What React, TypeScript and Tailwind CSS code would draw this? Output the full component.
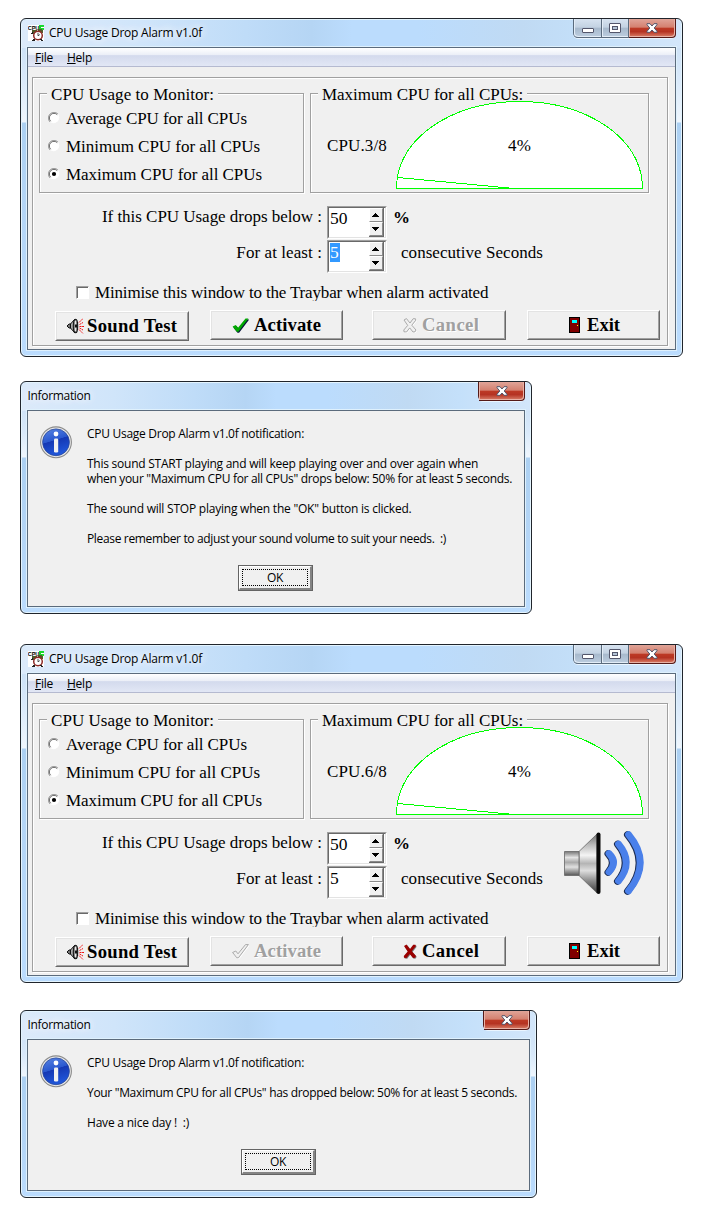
import type { ReactNode } from "react";

const SERIF = "font-['Liberation_Serif','Times_New_Roman',serif] text-[17px] leading-[20px] whitespace-pre";
const UI = "font-['Open_Sans','Noto_Sans',sans-serif] text-[12px] leading-[15px] whitespace-pre";
const ETCHED = "border border-[#a0a0a0] shadow-[1px_1px_0_#fff,inset_1px_1px_0_#fff]";

function AppIcon() {
  return (
    <svg width="16" height="16" viewBox="0 0 16 16" shapeRendering="crispEdges">
      <rect width="16" height="16" fill="#fff" />
      <path d="M11 0h5v2h-3v1h3v2h-5z" fill="#16d92b" />
      <text x="-.3" y="4.500" fontFamily="Liberation Sans" fontWeight="bold" fontSize="5.500" fill="#000">CPU</text>
      <path d="M4 5h5v2H7l-1 2H4zM10 4h4l1 2v2h-2l-2-2h-1z" fill="#4e5a28" />
      <g shapeRendering="auto">
        <circle cx="10" cy="10.500" r="4.300" fill="#fff" stroke="#8e2a26" strokeWidth="1.500" />
        <path d="M10 7.800v3l1.800-1.200" fill="none" stroke="#222" strokeWidth=".8" />
      </g>
      <path d="M5 14h2v2H4zM12 14h2l1 2h-2zM4 7h1v2H3z" fill="#222" />
    </svg>
  );
}

function CloseGlyph() {
  return (
    <svg width="12" height="10" viewBox="0 0 12 10">
      <path d="M1 .7h3L6 3 8 .7h3v1L8.200 5 11 8.300v1H8L6 7 4 9.300H1v-1L3.800 5 1 1.700z" fill="#fff" stroke="#53566b" strokeWidth="1" strokeLinejoin="round" />
    </svg>
  );
}

function CloseButton({ width }: { width: string }) {
  return (
    <div className={"flex h-[19px] items-center justify-center rounded-br-[4px] border-r border-b border-[#551a18] bg-[linear-gradient(180deg,#e0a498_0%,#d4806f_46%,#bd3a25_50%,#b53322_70%,#d9806a_100%)] shadow-[inset_-1px_-1px_0_#e9b2a6,inset_1px_0_0_#e9b2a6] " + width}>
      <CloseGlyph />
    </div>
  );
}

function CaptionButtons() {
  const btn = "flex h-[19px] items-center justify-center border-b border-r border-[#5a6b7d] bg-[linear-gradient(180deg,#d7e3f0_0%,#c3d2e2_46%,#a7b9cc_50%,#bccddf_100%)] shadow-[inset_1px_-1px_0_#e3edf7]";
  return (
    <div className="ml-auto flex rounded-b-[5px] border-l border-[#5a6b7d] shadow-[0_1px_0_#eaf5ff]">
      <div className={btn + " w-[28px] rounded-bl-[4px]"}>
        <svg width="12" height="6" viewBox="0 0 12 6" className="mt-[4px]">
          <rect x=".5" y="1.500" width="11" height="4" rx=".5" fill="#fff" stroke="#53566b" />
        </svg>
      </div>
      <div className={btn + " w-[27px]"}>
        <svg width="12" height="10" viewBox="0 0 12 10">
          <rect x=".5" y=".5" width="11" height="9" rx=".5" fill="#fff" stroke="#53566b" />
          <rect x="3.500" y="3.500" width="5" height="3" fill="#b4c4d6" stroke="#53566b" />
        </svg>
      </div>
      <CloseButton width="w-[47px]" />
    </div>
  );
}

const SIDE: Record<string, string> = {
  tall: "bg-[linear-gradient(180deg,#c3dbf3_0px,#d9e9fa_60px,#eff6fd_103px,#acd0f2_104px,#b4d5f6_180px,#bbdcfe_100%)]",
  mid: "bg-[linear-gradient(180deg,#c3dbf3_0px,#d9e9fa_50px,#eff6fd_75px,#acd0f2_76px,#b4d5f6_150px,#bbdcfe_100%)]",
  low: "bg-[linear-gradient(180deg,#c3dbf3_0px,#d9e9fa_45px,#eff6fd_65px,#acd0f2_66px,#b4d5f6_130px,#bbdcfe_100%)]",
};

function Frame({ size, side, title, titleClass, icon, dialog, children }: {
  size: string; side: string; title: string; titleClass: string; icon?: boolean; dialog?: boolean; children: ReactNode;
}) {
  return (
    <div className={"flex flex-col rounded-[6px] border border-[#20252c] shadow-[inset_0_0_0_1px_#e4f4fe] " + size + " " + SIDE[side]}>
      <div className="mx-px mt-px -mb-px flex h-[28px] items-start rounded-t-[4px] bg-[linear-gradient(90deg,#dceafa_0%,#d0e5fa_18%,#bfdcf8_34%,#b5d5f4_44%,#bbdcfd_50%,#bbdcfd_60%,#c0daf3_76%,#c4e0fa_86%,#d3e6fa_100%)] px-[5px]">
        <div className="-mt-px flex pt-[6px]">
          {icon && <div className="mr-[5px] ml-px"><AppIcon /></div>}
          <span className={UI + " text-black [text-shadow:0_0_8px_#fff,0_0_8px_#fff] " + titleClass}>{title}</span>
        </div>
        <div className="-mt-px ml-auto flex">
          {dialog ? <div className="rounded-b-[5px] border-l border-[#551a18] shadow-[0_1px_0_#eaf5ff]"><CloseButton width="w-[46px]" /></div> : <CaptionButtons />}
        </div>
      </div>
      <div className="mx-[6px] mb-[6px] flex flex-1 flex-col border border-[#5b6b7c] bg-[#f0f0f0] shadow-[0_0_0_1px_#dff1fd]">{children}</div>
    </div>
  );
}

function Radio({ on }: { on?: boolean }) {
  return (
    <svg width="12" height="12" viewBox="0 0 12 12">
      <circle cx="6" cy="6" r="5" fill="#fff" />
      <path d="M2 10A5.500 5.500 0 0 1 10 2" fill="none" stroke="#a0a0a0" />
      <path d="M2.700 9.300A4.500 4.500 0 0 1 9.300 2.700" fill="none" stroke="#696969" />
      <path d="M2.300 9.900A5.500 5.500 0 0 0 9.900 2.300" fill="none" stroke="#fff" />
      {on && <circle cx="6" cy="6" r="2.100" fill="#000" />}
    </svg>
  );
}

function Gauge({ value }: { value: string }) {
  return (
    <div className="relative h-[90px] w-[248px]">
      <svg width="248" height="90" viewBox="0 0 248 90" shapeRendering="crispEdges">
        <path d="M.5 88.500V85C3 35 60 1.500 123.500 1.500S244 35 246.500 85V88.500Z" fill="#fff" stroke="#00ff00" />
        <path d="M2 77.500L118 88.500" stroke="#00ff00" />
      </svg>
      <span className={"absolute top-[36px] left-[112px] tracking-[0.3px] text-black " + SERIF}>{value}</span>
    </div>
  );
}

function Spin() {
  const b = "flex w-[14px] items-center justify-center border-t border-l border-r border-b border-t-white border-l-white border-r-[#8a8a8a] border-b-[#8a8a8a] bg-[#f0f0f0]";
  return (
    <div className="mr-px ml-auto flex h-[29px] flex-col border-r border-b border-[#696969]">
      <div className={b + " h-[14px]"}><svg width="8" height="4" shapeRendering="crispEdges"><path d="M3 0h1v1h1v1h1v1h1v1H0V3h1V2h1V1h1z" /></svg></div>
      <div className={b + " h-[14px]"}><svg width="8" height="4" shapeRendering="crispEdges"><path d="M0 0h7v1H6v1H5v1H4v1H3V3H2V2H1V1H0z" /></svg></div>
    </div>
  );
}

function NumberBox({ value, selected }: { value: string; selected?: boolean }) {
  return (
    <div className="ml-[5px] flex h-[33px] w-[60px] border-t border-r border-b border-l border-t-[#a0a0a0] border-r-white border-b-white border-l-[#a0a0a0]">
      <div className="flex flex-1 items-start border-t border-r border-b border-l border-t-[#696969] border-r-[#e3e3e3] border-b-[#e3e3e3] border-l-[#696969] bg-white pl-px">
        <span className={"mt-px font-['Liberation_Serif','Times_New_Roman',serif] text-[17.5px] leading-[19px] " + (selected ? "bg-[#3399ff] pr-px text-white" : "text-black")}>{value}</span>
        <Spin />
      </div>
    </div>
  );
}

function SoundIcon() {
  return (
    <svg width="17" height="16" viewBox="0 0 17 16">
      <path d="M0 8L2 6h2V10H2z" fill="#777" stroke="#111" />
      <path d="M3.500 6L7.500 1.500v13L3.500 10z" fill="#a9a9a9" stroke="#111" strokeWidth="1" />
      <ellipse cx="8.500" cy="8" rx="2.200" ry="6.800" fill="#8b8b8b" stroke="#111" strokeWidth="1.100" />
      <path d="M8.500 3v10" stroke="#e8e8e8" />
      <rect x="8" y="6.500" width="2" height="3" fill="#111" />
      <path d="M12 4.500l4-4M12.500 6.500l3.500-2M12.500 8.500H17M12.500 10l3.500 2M12 11.500l4 4" stroke="#f01010" strokeWidth="1" strokeDasharray="2 .6" fill="none" />
    </svg>
  );
}

function CheckIcon({ off }: { off?: boolean }) {
  const d = "M.6 8.500L3.800 7 6 9.800 13.500 .6H16.400L6.400 13.800H4.800z";
  return (
    <svg width="17" height="15" viewBox="0 0 17 15">
      <path d={d} fill={off ? "none" : "#06103a"} stroke={off ? "#fff" : "none"} transform="translate(.7 .9)" />
      <path d={d} fill={off ? "#f0f0f0" : "#00a800"} stroke={off ? "#a0a0a0" : "none"} strokeWidth=".9" />
    </svg>
  );
}

function CrossIcon({ off }: { off?: boolean }) {
  const d = "M1 2L3.500 .6 7 5 10.200 .7 12.500 .8 12.800 2.200 8.800 7.200 13 12 12 13.800 10 14 6.700 9.900 3.500 14 1 13.800 .8 12 4.700 7.400z";
  return (
    <svg width="14" height="15" viewBox="0 0 14 15">
      <path d={d} transform="translate(.7 .7)" fill={off ? "none" : "#777"} stroke={off ? "#fff" : "none"} />
      <path d={d} fill={off ? "#f0f0f0" : "#9b0000"} stroke={off ? "#a0a0a0" : "none"} strokeWidth=".9" />
    </svg>
  );
}

function DoorIcon() {
  return (
    <svg width="11" height="16" viewBox="0 0 11 16" shapeRendering="crispEdges">
      <rect x=".5" y=".5" width="10" height="15" fill="#800000" stroke="#000" />
      <rect x="3" y="3" width="5" height="3" fill="#00ffff" />
      <rect x="8" y="8" width="1" height="1" fill="#ffff00" />
    </svg>
  );
}

function PushButton({ className, off, icon, label, labelClass }: { className: string; off?: boolean; icon: ReactNode; label: string; labelClass: string }) {
  return (
    <button className={"flex h-[30px] border-t border-r border-b border-l border-t-white border-r-[#696969] border-b-[#696969] border-l-white bg-[#f0f0f0] " + className}>
      <span className="flex h-full w-full items-center border-t border-r border-b border-l border-t-[#e3e3e3] border-r-[#a0a0a0] border-b-[#a0a0a0] border-l-[#e3e3e3]">
        {icon}
        <span className={"font-['Liberation_Serif','Times_New_Roman',serif] text-[18.67px] leading-[20px] font-bold whitespace-pre " + labelClass + (off ? " text-[#a0a0a0] [text-shadow:1px_1px_0_#fff]" : " text-black")}>{label}</span>
      </span>
    </button>
  );
}

function Speaker() {
  return (
    <svg width="82" height="68" viewBox="0 0 82 68" className="mt-[-2px] ml-[21px]">
      <defs>
        <linearGradient id="metal" x1="0" y1="0" x2="0" y2="1">
          <stop offset="0" stopColor="#6f6f6f" /><stop offset=".18" stopColor="#b9b9b9" /><stop offset=".36" stopColor="#f4f4f4" />
          <stop offset=".5" stopColor="#b5b5b5" /><stop offset=".62" stopColor="#dedede" /><stop offset=".8" stopColor="#8a8a8a" /><stop offset="1" stopColor="#3c3c3c" />
        </linearGradient>
        <linearGradient id="neck" x1="0" y1="0" x2="0" y2="1">
          <stop offset="0" stopColor="#777" /><stop offset=".25" stopColor="#e4e4e4" /><stop offset=".45" stopColor="#a9a9a9" />
          <stop offset=".65" stopColor="#e0e0e0" /><stop offset="1" stopColor="#555" />
        </linearGradient>
      </defs>
      <path d="M15 21.500L33 4V63L15 45.500z" fill="url(#metal)" stroke="#666" strokeWidth=".8" />
      <path d="M.5 21.500H15V45.500H.5z" fill="url(#neck)" stroke="#666" strokeWidth=".8" />
      <path d="M34.500 4.500V62" stroke="#080808" strokeWidth="4" strokeLinecap="round" />
      <g fill="none" strokeLinecap="round">
        <g stroke="#1c2c52" transform="translate(-1 .3)">
          <path d="M45 23.500Q54 32.500 45 42" strokeWidth="7" />
          <path d="M54.500 14Q70 32.500 54.500 51" strokeWidth="7" />
          <path d="M64.500 4.500Q88 32.500 64.500 61" strokeWidth="7" />
        </g>
        <g stroke="#4a80ea">
          <path d="M45 23.500Q54 32.500 45 42" strokeWidth="6.800" />
          <path d="M54.500 14Q70 32.500 54.500 51" strokeWidth="6.800" />
          <path d="M64.500 4.500Q88 32.500 64.500 61" strokeWidth="6.800" />
        </g>
      </g>
    </svg>
  );
}

const RADIOS = [
  { label: "Average CPU for all CPUs", cls: "tracking-[-0.08px]" },
  { label: "Minimum CPU for all CPUs", cls: "tracking-[-0.02px]" },
  { label: "Maximum CPU for all CPUs", cls: "tracking-[-0.06px]", on: true },
];

function MainWindow({ cpu, active }: { cpu: string; active?: boolean }) {
  return (
    <Frame size="h-[339px] w-[663px]" side="tall" title="CPU Usage Drop Alarm v1.0f" titleClass="tracking-[-0.222px]" icon>
      <div className={"flex h-[19px] border-b border-[#b5bad0] bg-[linear-gradient(180deg,#ffffff_0%,#eaeef7_40%,#d3daed_42%,#e2e7f5_100%)] pt-[2px] pl-[7px] tracking-[-0.25px] text-black " + UI}>
        <span className="w-[32px]"><u>F</u>ile</span>
        <span><u>H</u>elp</span>
      </div>
      <div className={"mt-[10px] ml-[4px] flex h-[269px] w-[636px] flex-col text-black " + ETCHED}>
        <div className="flex gap-[6px] pt-[15px] pl-[6px]">
          <div className={"h-[100px] w-[265px] " + ETCHED}>
            <div className={"-mt-[9px] -mb-px ml-[7px] w-[171px] bg-[#f0f0f0] pl-[4px] tracking-[0.05px] " + SERIF}>CPU Usage to Monitor:</div>
            {RADIOS.map((r) => (
              <div key={r.label} className="flex h-[28px] items-center gap-[6px] pl-[8px]">
                <Radio on={r.on} />
                <span className={"mt-[2px] " + SERIF + " " + r.cls}>{r.label}</span>
              </div>
            ))}
          </div>
          <div className={"flex h-[100px] w-[339px] flex-col " + ETCHED}>
            <div className={"-mt-[9px] ml-[7px] w-[209px] bg-[#f0f0f0] pl-[4px] tracking-[-0.04px] " + SERIF}>Maximum CPU for all CPUs:</div>
            <div className="-mt-[5px] flex pl-[16px]">
              <span className={"mt-[36px] w-[69px] tracking-[0.13px] " + SERIF}>{cpu}</span>
              <Gauge value="4%" />
            </div>
          </div>
        </div>
        <div className="mt-[13px] flex h-[67px]">
          <div className="flex w-[510px] flex-col gap-px">
            <div className="flex items-start">
              <span className={"mt-px w-[289px] text-right tracking-[-0.03px] " + SERIF}>If this CPU Usage drops below :</span>
              <NumberBox value="50" />
              <span className={"mt-[2px] ml-[6px] font-bold " + SERIF}>%</span>
            </div>
            <div className="flex items-start">
              <span className={"mt-[3px] w-[289px] text-right tracking-[0.08px] " + SERIF}>For at least :</span>
              <NumberBox value="5" selected={!active} />
              <span className={"mt-[3px] ml-[14px] tracking-[0.04px] " + SERIF}>consecutive Seconds</span>
            </div>
          </div>
          {active && <Speaker />}
        </div>
        <div className="mt-[9px] flex h-[19px] items-start overflow-hidden pl-[43px]">
          <div className="mt-[4px] h-[13px] w-[13px] border-t border-r border-b border-l border-t-[#a0a0a0] border-r-white border-b-white border-l-[#a0a0a0]">
            <div className="h-full w-full border-t border-l border-[#696969] bg-white" />
          </div>
          <span className={"mt-px ml-[6px] tracking-[-0.16px] " + SERIF}>Minimise this window to the Traybar when alarm activated</span>
        </div>
        <div className="mt-[9px] flex pl-[22px]">
          <PushButton className="mt-px w-[134px] [&>span]:pl-[10px]" icon={<SoundIcon />} label="Sound Test" labelClass="ml-[3px] tracking-[0.27px]" />
          <PushButton className="ml-[21px] w-[133px] [&>span]:pl-[20px]" off={active} icon={<CheckIcon off={active} />} label="Activate" labelClass="ml-[5px] tracking-[0.09px]" />
          <PushButton className="ml-[29px] w-[134px] [&>span]:pl-[29px]" off={!active} icon={<CrossIcon off={!active} />} label="Cancel" labelClass="ml-[5px] tracking-[0.4px]" />
          <PushButton className="ml-[21px] w-[133px] [&>span]:pl-[40px]" icon={<DoorIcon />} label="Exit" labelClass="ml-[7px] tracking-[-0.04px]" />
        </div>
      </div>
    </Frame>
  );
}

function InfoIcon() {
  return (
    <svg width="32" height="33" viewBox="0 0 32 33">
      <defs>
        <linearGradient id="blue" x1="0" y1="0" x2=".3" y2="1">
          <stop offset="0" stopColor="#5a86e4" /><stop offset=".5" stopColor="#2a58cf" /><stop offset=".52" stopColor="#1538b4" /><stop offset="1" stopColor="#1f55d8" />
        </linearGradient>
      </defs>
      <circle cx="16" cy="16.300" r="15.400" fill="#e8e8e8" stroke="#8b8b8b" strokeWidth="1.100" />
      <circle cx="16" cy="16.300" r="13.400" fill="url(#blue)" stroke="#27479c" strokeWidth=".8" />
      <circle cx="16" cy="8" r="2.400" fill="#fff" />
      <rect x="14" y="12.500" width="4.200" height="14" rx="1.200" fill="#f1f1f1" />
    </svg>
  );
}

function InfoDialog({ size, side, lines, okClass }: { size: string; side: string; lines: [string, string][]; okClass: string }) {
  return (
    <Frame size={size} side={side} title="Information" titleClass="tracking-[-0.32px] pl-[0.5px]" dialog>
      <div className="flex gap-[15px] pt-[15px] pl-[12px] text-black">
        <InfoIcon />
        <div>
          {lines.map(([text, cls], i) => (
            <p key={i} className={"h-[15px] " + UI + " " + cls}>{text}</p>
          ))}
        </div>
      </div>
      <button className={"mt-[19px] h-[26px] w-[75px] border border-[#646464] bg-[#f0f0f0] text-black " + okClass}>
        <span className="flex h-full w-full border-t border-r-2 border-b-2 border-l border-t-white border-r-[#848484] border-b-[#848484] border-l-white p-[2px]">
          <span className={"flex h-full w-full items-center justify-center border border-dotted border-black pb-px tracking-[-0.34px] " + UI}>OK</span>
        </span>
      </button>
    </Frame>
  );
}

export default function App() {
  return (
    <div className="flex h-[1227px] w-[708px] flex-col bg-white pt-[18px] pl-[20px]">
      <MainWindow cpu="CPU.3/8" />
      <div className="mt-[24px]">
        <InfoDialog
          size="h-[233px] w-[512px]"
          side="mid"
          okClass="ml-[210px]"
          lines={[
            ["CPU Usage Drop Alarm v1.0f notification:", "tracking-[-0.282px]"],
            ["", ""],
            ["This sound START playing and will keep playing over and over again when", "tracking-[-0.25px]"],
            ['when your "Maximum CPU for all CPUs" drops below: 50% for at least 5 seconds.', "tracking-[-0.322px]"],
            ["", ""],
            ['The sound will STOP playing when the "OK" button is clicked.', "tracking-[-0.225px]"],
            ["", ""],
            ["Please remember to adjust your sound volume to suit your needs.  :)", "tracking-[-0.344px]"],
          ]}
        />
      </div>
      <div className="mt-[30px]">
        <MainWindow cpu="CPU.6/8" active />
      </div>
      <div className="mt-[27px]">
        <InfoDialog
          size="h-[188px] w-[517px]"
          side="low"
          okClass="ml-[213px]"
          lines={[
            ["CPU Usage Drop Alarm v1.0f notification:", "tracking-[-0.282px]"],
            ["", ""],
            ['Your "Maximum CPU for all CPUs" has dropped below: 50% for at least 5 seconds.', "tracking-[-0.323px]"],
            ["", ""],
            ["Have a nice day !  :)", "tracking-[-0.208px]"],
          ]}
        />
      </div>
    </div>
  );
}
